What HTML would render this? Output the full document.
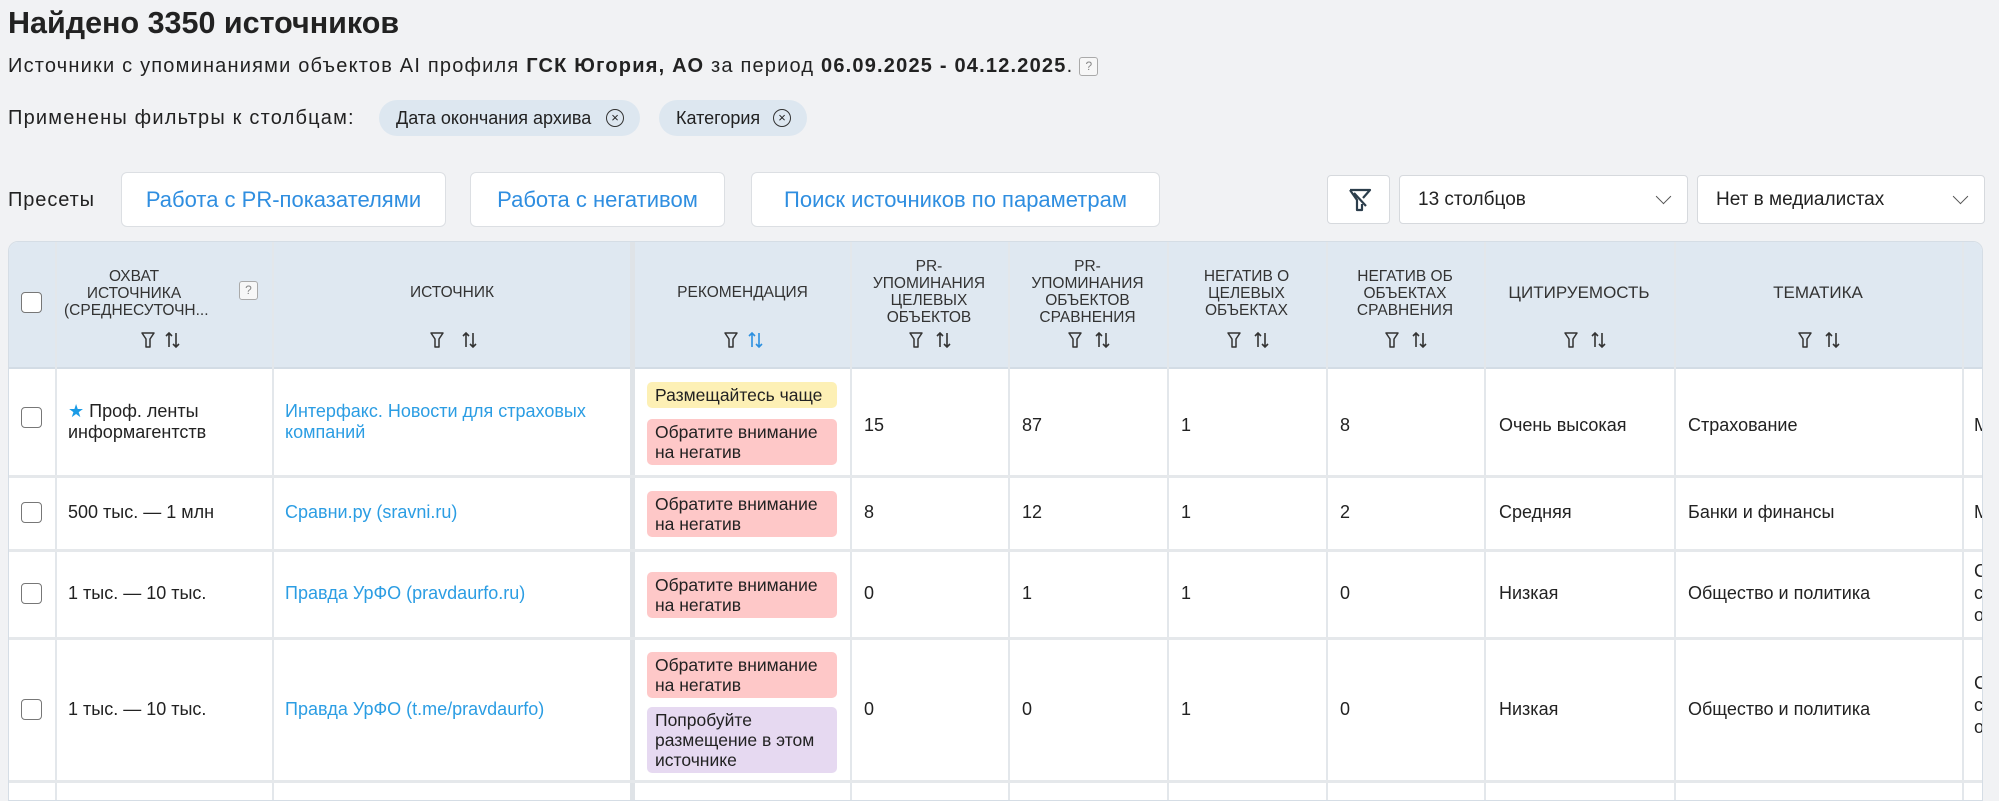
<!DOCTYPE html>
<html><head><meta charset="utf-8">
<style>
*{box-sizing:border-box;margin:0;padding:0}
body{width:1999px;height:790px;overflow:hidden;background:#f1f2f4;font-family:"Liberation Sans","DejaVu Sans",sans-serif;color:#222;position:relative}
.a{position:absolute}
h1{position:absolute;left:8px;top:6px;font-size:30.5px;font-weight:bold;color:#222}
.sub{left:8px;top:55px;font-size:20px;letter-spacing:1.2px}
.help{display:inline-block;width:19px;height:19px;border:1px solid #aaa;border-radius:3px;font-size:12px;color:#888;text-align:center;line-height:17px;vertical-align:2px;margin-left:6px;background:#f7f7f7;letter-spacing:0}
.chip{position:absolute;top:100px;height:36px;border-radius:18px;background:#dde7f0;font-size:18px;line-height:36px;padding-left:17px}
.x{position:absolute;top:9px;width:18px;height:18px;border:1.5px solid #333;border-radius:50%;font-size:13px;line-height:15px;text-align:center}
.btn{position:absolute;top:172px;height:55px;background:#fff;border:1px solid #dcdfe3;border-radius:6px;color:#2f8ee0;font-size:22px;text-align:center;line-height:53px}
.sel{position:absolute;top:175px;height:49px;background:#fff;border:1px solid #d6d9dd;border-radius:4px;font-size:19px;line-height:47px;padding-left:18px}
.chev{position:absolute;right:18px;top:15px;width:11px;height:11px;border-right:1.5px solid #555;border-bottom:1.5px solid #555;transform:rotate(45deg)}
.tbl{position:absolute;left:8px;top:241px;width:1975px;height:560px;border:1px solid #d5dde5;border-radius:10px 10px 0 0;overflow:hidden;background:#fff}
.hd{position:absolute;left:0;top:0;width:100%;height:127px;background:#dfe8f1;border-bottom:2px solid #d3dce5}
.vl{position:absolute;top:0;height:560px;width:2px;background:#e3e7eb}
.hl{position:absolute;left:0;width:100%;height:3px;background:#e5e8eb}
.ht{position:absolute;font-size:15.5px;color:#333;text-align:center;line-height:17px;text-transform:uppercase}
.ic{position:absolute;top:88px}
.c{position:absolute;font-size:18px;line-height:21px;color:#222}
.lk{color:#2b9de3}
.cb{position:absolute;left:12px;width:21px;height:21px;border:1.5px solid #777;border-radius:4px;background:#fff}
.bd{position:absolute;left:638px;width:190px;border-radius:5px;font-size:17.5px;line-height:20px;padding:3px 8px}
.y{background:#fdf0b5}.r{background:#fec8c8}.p{background:#e6d9f1}
</style></head><body>
<h1>Найдено 3350 источников</h1>
<div class="a sub">Источники с упоминаниями объектов AI профиля <b>ГСК Югория, АО</b> за период <b>06.09.2025 - 04.12.2025</b>.<span class="help">?</span></div>
<div class="a sub" style="top:107px">Применены фильтры к столбцам:</div>
<div class="chip" style="left:379px;width:261px">Дата окончания архива<span class="x" style="left:227px">×</span></div>
<div class="chip" style="left:659px;width:148px">Категория<span class="x" style="left:114px">×</span></div>
<div class="a sub" style="top:189px;letter-spacing:0.9px">Пресеты</div>
<div class="btn" style="left:121px;width:325px">Работа с PR-показателями</div>
<div class="btn" style="left:470px;width:255px">Работа с негативом</div>
<div class="btn" style="left:751px;width:409px">Поиск источников по параметрам</div>
<div class="sel" style="left:1327px;width:63px;padding:0"><svg width="63" height="47" viewBox="0 0 63 47"><path d="M22 14h20l-7 8M22 14l7 10v10h5v-6M26 17l12 13" fill="none" stroke="#2c3e4c" stroke-width="2.2" stroke-linejoin="round"/></svg></div>
<div class="sel" style="left:1399px;width:289px">13 столбцов<span class="chev"></span></div>
<div class="sel" style="left:1697px;width:288px">Нет в медиалистах<span class="chev"></span></div>

<div class="tbl">
<div class="hd"></div>
<div class="vl" style="left:46px"></div>
<div class="vl" style="left:263px"></div>
<div class="vl" style="left:621px;width:5px;background:#dfe3e7"></div>
<div class="vl" style="left:841px"></div>
<div class="vl" style="left:999px"></div>
<div class="vl" style="left:1158px"></div>
<div class="vl" style="left:1317px"></div>
<div class="vl" style="left:1475px"></div>
<div class="vl" style="left:1665px"></div>
<div class="vl" style="left:1953px"></div>
<div class="hl" style="top:233px"></div>
<div class="hl" style="top:307px"></div>
<div class="hl" style="top:395px"></div>
<div class="hl" style="top:538px"></div>

<div class="cb" style="top:50px"></div>
<div class="ht" style="left:55px;top:26px;width:140px">Охват<br>источника<br>(среднесуточн...</div>
<div class="help a" style="left:230px;top:39px;margin:0">?</div>
<div class="ht" style="left:263px;top:42px;width:360px">Источник</div>
<div class="ht" style="left:626px;top:42px;width:215px">Рекомендация</div>
<div class="ht" style="left:841px;top:16px;width:158px">PR-<br>упоминания<br>целевых<br>объектов</div>
<div class="ht" style="left:999px;top:16px;width:159px">PR-<br>упоминания<br>объектов<br>сравнения</div>
<div class="ht" style="left:1158px;top:26px;width:159px">Негатив о<br>целевых<br>объектах</div>
<div class="ht" style="left:1317px;top:26px;width:158px">Негатив об<br>объектах<br>сравнения</div>
<div class="ht" style="left:1475px;top:42px;width:190px;font-size:17px">Цитируемость</div>
<div class="ht" style="left:1665px;top:42px;width:288px;font-size:17px">Тематика</div>

<svg class="ic" style="left:0" width="1975" height="24">
<defs><g id="f"><path d="M0 3h12l-4 6v8h-4v-8z" fill="none" stroke="#333" stroke-width="1.5" stroke-linejoin="round"/></g>
<g id="s"><path d="M4 3v14M1 6l3-3 3 3M11 3v14M8 14l3 3 3-3" fill="none" stroke="#333" stroke-width="1.6"/></g>
<g id="sb"><path d="M4 3v14M1 6l3-3 3 3M11 3v14M8 14l3 3 3-3" fill="none" stroke="#2b8fe0" stroke-width="1.6"/></g></defs>
<use href="#f" x="133"/><use href="#s" x="156"/>
<use href="#f" x="422"/><use href="#s" x="453"/>
<use href="#f" x="716"/><use href="#sb" x="739"/>
<use href="#f" x="901"/><use href="#s" x="927"/>
<use href="#f" x="1060"/><use href="#s" x="1086"/>
<use href="#f" x="1219"/><use href="#s" x="1245"/>
<use href="#f" x="1377"/><use href="#s" x="1403"/>
<use href="#f" x="1556"/><use href="#s" x="1582"/>
<use href="#f" x="1790"/><use href="#s" x="1816"/>
</svg>

<div class="cb" style="top:165px"></div>
<div class="c" style="left:59px;top:159px"><span style="color:#1a9be6">★</span> Проф. ленты<br>информагентств</div>
<div class="c lk" style="left:276px;top:159px">Интерфакс. Новости для страховых<br>компаний</div>
<div class="bd y" style="top:140px">Размещайтесь чаще</div>
<div class="bd r" style="top:177px">Обратите внимание<br>на негатив</div>
<div class="c" style="left:855px;top:173px">15</div>
<div class="c" style="left:1013px;top:173px">87</div>
<div class="c" style="left:1172px;top:173px">1</div>
<div class="c" style="left:1331px;top:173px">8</div>
<div class="c" style="left:1490px;top:173px">Очень высокая</div>
<div class="c" style="left:1679px;top:173px">Страхование</div>
<div class="c" style="left:1965px;top:173px">М</div>

<div class="cb" style="top:260px"></div>
<div class="c" style="left:59px;top:260px">500 тыс. — 1 млн</div>
<div class="c lk" style="left:276px;top:260px">Сравни.ру (sravni.ru)</div>
<div class="bd r" style="top:249px">Обратите внимание<br>на негатив</div>
<div class="c" style="left:855px;top:260px">8</div>
<div class="c" style="left:1013px;top:260px">12</div>
<div class="c" style="left:1172px;top:260px">1</div>
<div class="c" style="left:1331px;top:260px">2</div>
<div class="c" style="left:1490px;top:260px">Средняя</div>
<div class="c" style="left:1679px;top:260px">Банки и финансы</div>
<div class="c" style="left:1965px;top:260px">М</div>

<div class="cb" style="top:341px"></div>
<div class="c" style="left:59px;top:341px">1 тыс. — 10 тыс.</div>
<div class="c lk" style="left:276px;top:341px">Правда УрФО (pravdaurfo.ru)</div>
<div class="bd r" style="top:330px">Обратите внимание<br>на негатив</div>
<div class="c" style="left:855px;top:341px">0</div>
<div class="c" style="left:1013px;top:341px">1</div>
<div class="c" style="left:1172px;top:341px">1</div>
<div class="c" style="left:1331px;top:341px">0</div>
<div class="c" style="left:1490px;top:341px">Низкая</div>
<div class="c" style="left:1679px;top:341px">Общество и политика</div>
<div class="c" style="left:1965px;top:318px;line-height:22px">С<br>с<br>о</div>

<div class="cb" style="top:457px"></div>
<div class="c" style="left:59px;top:457px">1 тыс. — 10 тыс.</div>
<div class="c lk" style="left:276px;top:457px">Правда УрФО (t.me/pravdaurfo)</div>
<div class="bd r" style="top:410px">Обратите внимание<br>на негатив</div>
<div class="bd p" style="top:465px">Попробуйте<br>размещение в этом<br>источнике</div>
<div class="c" style="left:855px;top:457px">0</div>
<div class="c" style="left:1013px;top:457px">0</div>
<div class="c" style="left:1172px;top:457px">1</div>
<div class="c" style="left:1331px;top:457px">0</div>
<div class="c" style="left:1490px;top:457px">Низкая</div>
<div class="c" style="left:1679px;top:457px">Общество и политика</div>
<div class="c" style="left:1965px;top:430px;line-height:22px">С<br>с<br>о</div>
</div>
</body></html>
